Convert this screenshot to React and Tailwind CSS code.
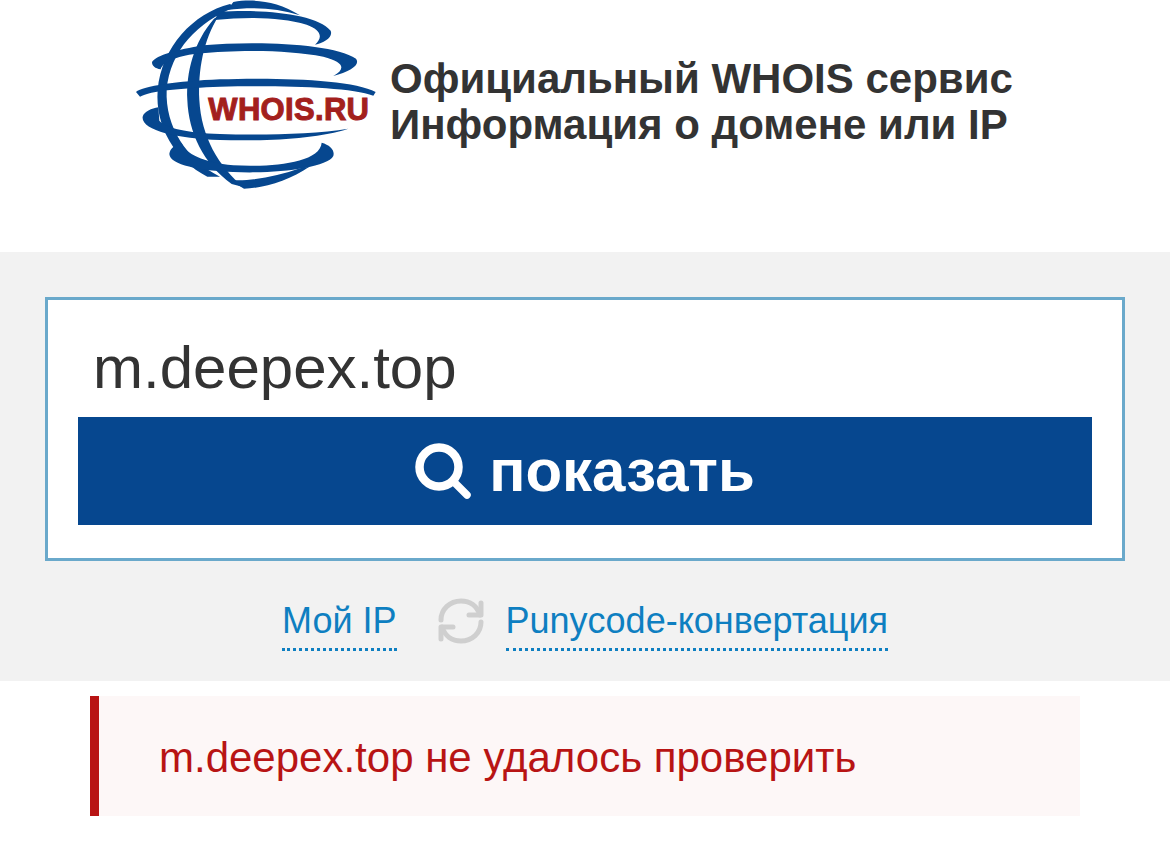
const Logo = () => (
  <svg width="270" height="200" viewBox="0 0 810 600" className="shrink-0">
    <g fill="#06478f">
      {/* meridians */}
      <path d="M282 56C222 125 198 215 202 300C206 400 250 490 335 552L372 562C295 500 244 410 238 300C234 210 250 120 296 48Z" />
      <path d="M330 12C220 40 125 140 113 270C105 380 165 480 262 530L300 530C200 480 135 380 140 270C150 150 235 65 345 22Z" />
      {/* top arc */}
      <path d="M296 36C420 26 590 40 632 92C640 112 612 128 585 134C612 110 600 88 560 74C480 50 380 50 284 60Z" />
      <path d="M340 6C400 -4 470 2 540 46C470 24 400 20 322 30Z" />
      {/* upper band */}
      <path d="M96 186C110 165 170 150 250 136C400 122 640 130 708 176C722 195 690 214 640 228C680 205 670 186 610 170C500 148 340 150 240 160C180 167 130 182 122 208C105 205 96 198 96 186Z" />
      {/* equator */}
      <path d="M48 276C70 258 170 244 300 238C470 232 700 238 767 276L760 287C690 260 470 256 300 260C190 264 90 272 60 290Z" />
      {/* lower band */}
      <path d="M68 350C72 335 95 325 115 322L118 362C140 385 200 398 300 402C420 406 580 403 685 386C590 418 420 424 300 420C170 416 62 390 68 350Z" />
      {/* bottom arc */}
      <path d="M148 462C150 445 165 435 185 430C195 460 250 488 340 496C450 502 600 490 605 428C630 435 645 450 640 468C620 505 460 522 340 516C240 512 150 495 148 462Z" />
      <path d="M330 540C390 545 470 530 540 505L568 500C510 540 430 565 372 566Z" />
    </g>
    <text
      x="265"
      y="361"
      fill="#a3201d"
      stroke="#a3201d"
      strokeWidth="3"
      fontFamily="'Liberation Sans', sans-serif"
      fontWeight="700"
      fontSize="93"
      textLength="482"
      lengthAdjust="spacing"
    >
      WHOIS.RU
    </text>
  </svg>
);

const App = () => {
  return (
    <div className="bg-white min-h-screen font-['Liberation_Sans',Arial,sans-serif] text-[#333]">
      <header className="h-[252px] flex pl-[120px] overflow-hidden">
        <Logo />
        <h1 className="pt-[56px] text-[42px] leading-[46px] font-bold whitespace-nowrap">
          Официальный WHOIS сервис
          <br />
          Информация о домене или IP
        </h1>
      </header>

      <section className="h-[429px] bg-[#f2f2f2] px-[45px] pt-[45px]">
        <form className="h-[264px] bg-white border-[3px] border-[#6aa9cb] px-[30px] pt-[30px]">
          <input
            type="text"
            readOnly
            value="m.deepex.top"
            className="block w-full h-[87px] px-[15px] pb-[12px] text-[60px] text-[#333] bg-transparent outline-none"
          />
          <button
            type="button"
            className="w-full h-[108px] bg-[#06478f] text-white text-[60px] font-bold flex items-center justify-center gap-[18px]"
          >
            <svg width="56" height="56" viewBox="0 0 56 56" fill="none" stroke="currentColor" strokeLinecap="round">
              <circle cx="24" cy="24" r="19.5" strokeWidth="8.5" />
              <path d="M38 38L52 52" strokeWidth="7.5" />
            </svg>
            показать
          </button>
        </form>

        <nav className="flex items-center justify-center mt-[36px] text-[36px] text-[#0e7fc1]">
          <a className="leading-[46px] pb-[4px] border-b-[3px] border-dotted border-[#0e7fc1]">
            Мой IP
          </a>
          <svg
            width="48"
            height="48"
            viewBox="0 0 48 48"
            fill="none"
            stroke="#cfcfcf"
            strokeWidth="5"
            strokeLinecap="round"
            strokeLinejoin="round"
            className="ml-[40px] mr-[21px] mb-[7px]"
          >
            <path d="M4 23C4 12 13 4 24 4C33 4 40 9 43 18" />
            <path d="M44 6V18H32" />
            <path d="M44 25C44 36 35 44 24 44C15 44 8 39 5 30" />
            <path d="M4 42V30H16" />
          </svg>
          <a className="leading-[46px] pb-[4px] border-b-[3px] border-dotted border-[#0e7fc1]">
            Punycode-конвертация
          </a>
        </nav>
      </section>

      <div className="mt-[15px] mx-[90px] h-[120px] flex items-center pl-[60px] pt-[2px] bg-[#fdf7f7] border-l-[9px] border-[#b81414] text-[42px] text-[#b81414]">
        m.deepex.top не удалось проверить
      </div>
    </div>
  );
};

export default App;
